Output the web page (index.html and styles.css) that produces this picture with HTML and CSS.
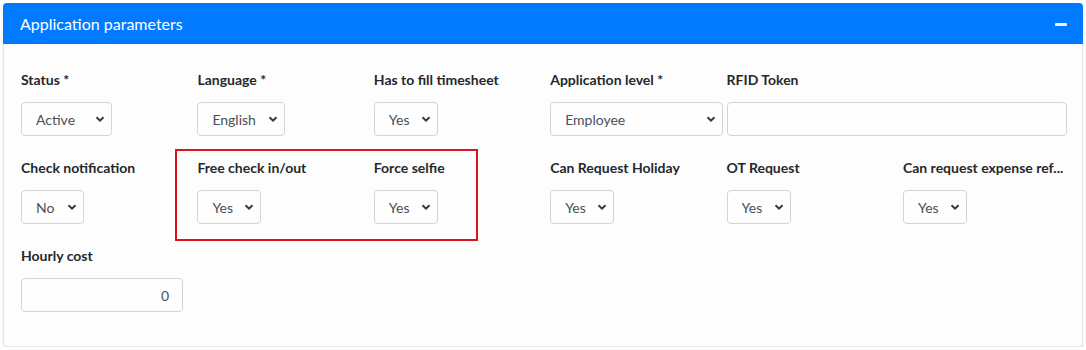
FILE: index.html
```html
<!DOCTYPE html>
<html lang="en">
<head>
<meta charset="utf-8">
<title>Application parameters</title>
<link rel="stylesheet" href="styles.css">
</head>
<body>
<div class="card">
  <div class="card-header">
    <span class="card-title">Application parameters</span>
    <span class="collapse-btn" aria-label="Collapse"></span>
  </div>
  <div class="card-body">
    <div class="grid">
      <div class="field">
        <label>Status *</label>
        <select class="w-status"><option>Active</option></select>
      </div>
      <div class="field">
        <label>Language *</label>
        <select class="w-lang"><option>English</option></select>
      </div>
      <div class="field">
        <label>Has to fill timesheet</label>
        <select class="w-yes"><option>Yes</option></select>
      </div>
      <div class="field">
        <label>Application level *</label>
        <select class="w-level"><option>Employee</option></select>
      </div>
      <div class="field span2">
        <label>RFID Token</label>
        <input class="w-rfid" type="text" value="">
      </div>

      <div class="field">
        <label>Check notification</label>
        <select class="w-no"><option>No</option></select>
      </div>
      <div class="field">
        <label>Free check in/out</label>
        <select class="w-yes"><option>Yes</option></select>
      </div>
      <div class="field">
        <label>Force selfie</label>
        <select class="w-yes"><option>Yes</option></select>
      </div>
      <div class="field">
        <label>Can Request Holiday</label>
        <select class="w-yes"><option>Yes</option></select>
      </div>
      <div class="field">
        <label>OT Request</label>
        <select class="w-yes"><option>Yes</option></select>
      </div>
      <div class="field">
        <label>Can request expense ref...</label>
        <select class="w-yes"><option>Yes</option></select>
      </div>

      <div class="field">
        <label>Hourly cost</label>
        <input class="w-cost num" type="text" value="0">
      </div>
    </div>
    <div class="highlight"></div>
  </div>
</div>
</body>
</html>
```
FILE: styles.css
```css
* { box-sizing: border-box; }
html, body { margin: 0; padding: 0; background: #ffffff; }
body {
  font-family: Lato, "Noto Sans", "Liberation Sans", sans-serif;
  color: #212529;
  padding: 3px 3px 0 3px;
}
.card {
  width: 1080px;
  background: #fdfdfe;
  border: 1px solid #e6e6ec;
  border-top: none;
  border-radius: 4px;
  box-shadow: 0 1px 2px rgba(0,0,0,0.12);
}
.card-header {
  height: 41px;
  background: #007bff;
  border-radius: 4px 4px 0 0;
  display: flex;
  align-items: center;
  justify-content: space-between;
  padding: 0 16px 0 17px;
  margin: 0 -1px;
}
.card-title {
  color: #ffffff;
  font-size: 16px;
  line-height: 1;
}
.collapse-btn {
  width: 12px;
  height: 3px;
  background: #e8f1ff;
  border-radius: 1px;
  margin-top: 2px;
}
.card-body {
  position: relative;
  padding: 25px 0 34px 17px;
}
.grid {
  display: grid;
  grid-template-columns: repeat(6, 176.4px);
  row-gap: 21px;
}
.field {
  display: flex;
  flex-direction: column;
  align-items: flex-start;
  min-width: 0;
}
.span2 { grid-column: span 2; }
label {
  font-size: 14px;
  font-weight: 700;
  line-height: 21px;
  color: #25282c;
  margin-bottom: 12px;
  white-space: nowrap;
}
select, input {
  height: 34px;
  border: 1px solid #d2d4da;
  border-radius: 4px;
  background-color: #fefefe;
  font-family: inherit;
  font-size: 14px;
  color: #495057;
  margin: 0;
}
select {
  -webkit-appearance: none;
  appearance: none;
  padding: 0 22px 0 14px;
  background-image: url("data:image/svg+xml,%3Csvg xmlns='http://www.w3.org/2000/svg' width='10' height='8' viewBox='0 0 10 8'%3E%3Cpath d='M1.5 2.2 L5 5.7 L8.5 2.2' fill='none' stroke='%23343a40' stroke-width='2'/%3E%3C/svg%3E");
  background-repeat: no-repeat;
  background-position: right 6px center;
  background-size: 10px 8px;
}
input { padding: 0 13px; }
input.num { text-align: right; }
.w-status { width: 91px; }
.w-lang { width: 88px; }
.w-yes { width: 64px; }
.w-no { width: 63px; }
.w-level { width: 173px; }
.w-rfid { width: 340px; }
.w-cost { width: 162px; }
.highlight {
  position: absolute;
  left: 171px;
  top: 105px;
  width: 303px;
  height: 92px;
  border: 2px solid #d9141f;
  pointer-events: none;
}
```
